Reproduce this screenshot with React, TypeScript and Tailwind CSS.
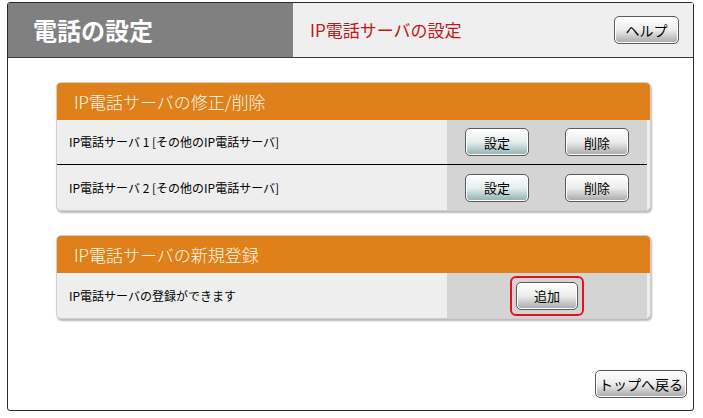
import React from "react";

const font = { fontFamily: '"Noto Sans CJK JP", "Noto Sans", sans-serif' };

function Btn({
  label,
  teal,
  className = "",
}: {
  label: string;
  teal?: boolean;
  className?: string;
}) {
  return (
    <button
      className={
        "flex items-center justify-center rounded-[5px] border border-[#5a5a5a] text-[13px] leading-none text-black shadow-[inset_0_0_0_1px_#ffffff] " +
        (teal
          ? "bg-gradient-to-b from-[#ffffff] via-[#e6eeee] to-[#8fb0b0] "
          : "bg-gradient-to-b from-[#ffffff] via-[#ececec] to-[#a8a8a8] ") +
        className
      }
    >
      {label}
    </button>
  );
}

function ServerRow({ text, last }: { text: string; last?: boolean }) {
  return (
    <div className={"flex h-[45px] " + (last ? "" : "border-b border-black")}>
      <div className="flex flex-1 items-center pl-3 text-[12px] text-black">
        {text}
      </div>
      <div className="flex w-[200px] items-center gap-[36px] bg-[#d4d4d4] pl-[18px]">
        <Btn label="設定" teal className="h-[28px] w-[64px]" />
        <Btn label="削除" className="h-[28px] w-[64px]" />
      </div>
    </div>
  );
}

function Panel({ title, children }: { title: string; children: React.ReactNode }) {
  return (
    <div className="overflow-hidden rounded-[5px] border border-[#cfcfcf] bg-[#eeeeee] shadow-[1px_2px_2px_rgba(0,0,0,0.28)]">
      <div className="flex h-[37px] items-center bg-[#e0801a] pl-[17px] text-[17px] font-light text-[#fff6e6]">
        {title}
      </div>
      <div className="pr-[3px]">{children}</div>
    </div>
  );
}

export default function App() {
  return (
    <div className="h-[418px] w-[703px] bg-white pl-[7px] pt-[2px]" style={font}>
      <div className="flex h-[409px] w-[687px] flex-col rounded-[3px] border border-[#2e2a26]">
        <div className="flex h-[55px] border-b border-[#3a3a3a]">
          <div className="flex w-[285px] items-center bg-[#808080] pl-[25px] text-[24px] font-bold text-white">
            電話の設定
          </div>
          <div className="flex flex-1 items-center justify-between bg-[#efefef] pl-[17px] pr-[14px]">
            <span className="text-[17px] text-[#c01818]">IP電話サーバの設定</span>
            <Btn label="ヘルプ" className="h-[28px] w-[65px] text-[14px]" />
          </div>
        </div>

        <div className="ml-[48px] mt-[24px] w-[595px]">
          <Panel title="IP電話サーバの修正/削除">
            <ServerRow text="IP電話サーバ 1 [その他のIP電話サーバ]" />
            <ServerRow text="IP電話サーバ 2 [その他のIP電話サーバ]" last />
          </Panel>
        </div>

        <div className="ml-[48px] mt-[24px] w-[595px]">
          <Panel title="IP電話サーバの新規登録">
            <div className="flex h-[45px]">
              <div className="flex flex-1 items-center pl-3 text-[12px] text-black">
                IP電話サーバの登録ができます
              </div>
              <div className="flex w-[200px] items-center bg-[#d4d4d4] pl-[63px]">
                <div className="rounded-[6px] border-2 border-[#e8101c] p-[4px]">
                  <Btn label="追加" className="h-[28px] w-[62px]" />
                </div>
              </div>
            </div>
          </Panel>
        </div>

        <div className="mt-auto mb-[12px] flex justify-end pr-[6px]">
          <Btn label="トップへ戻る" className="h-[28px] w-[92px] text-[14px]" />
        </div>
      </div>
    </div>
  );
}
